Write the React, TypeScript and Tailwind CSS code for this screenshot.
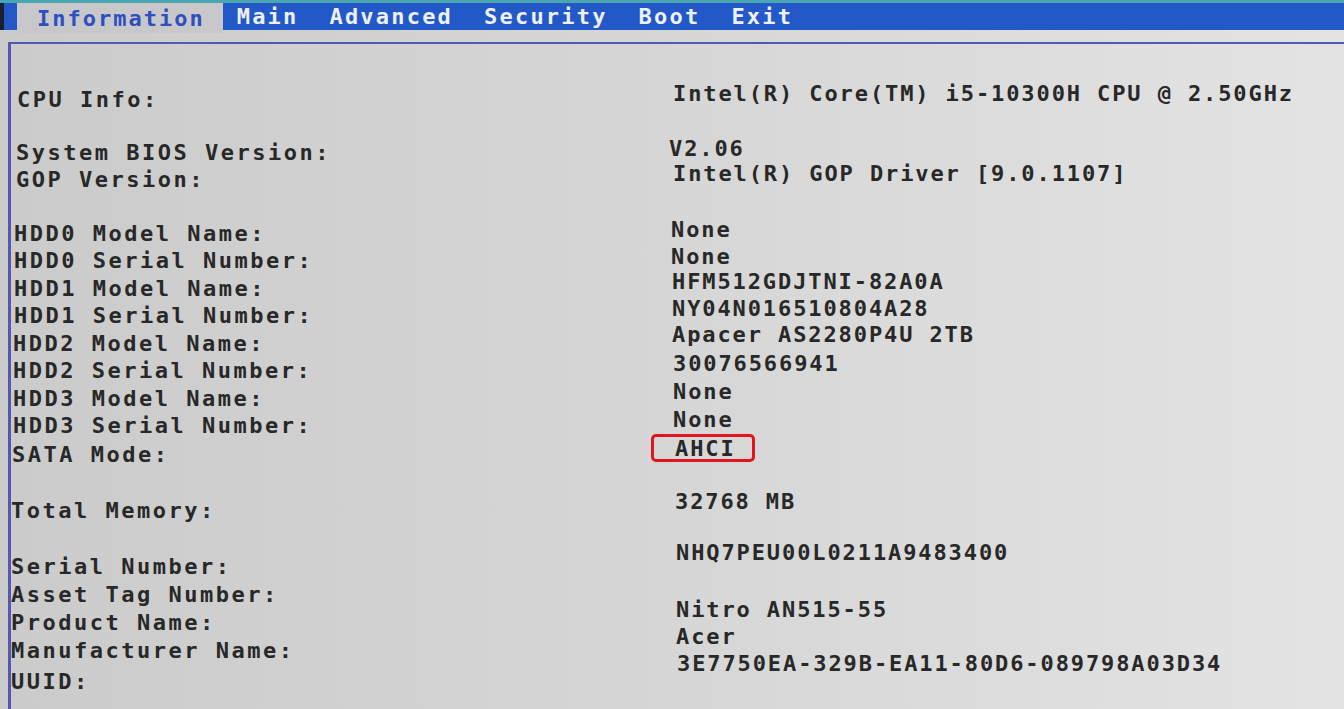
import React from "react";

type Row = { text: string; cls: string; box?: boolean };

const labels: Row[] = [
  { text: "CPU Info:", cls: "h-[27px] leading-[27px] mt-[42px] pl-[6px]" },
  { text: "System BIOS Version:", cls: "h-[27px] leading-[27px] mt-[26px] pl-[5px]" },
  { text: "GOP Version:", cls: "h-[27px] leading-[27px] mt-0 pl-[5px]" },
  { text: "HDD0 Model Name:", cls: "h-[27px] leading-[27px] mt-[27px] pl-[3px]" },
  { text: "HDD0 Serial Number:", cls: "h-[27px] leading-[27px] mt-0 pl-[3px]" },
  { text: "HDD1 Model Name:", cls: "h-[27px] leading-[27px] mt-[1px] pl-[3px]" },
  { text: "HDD1 Serial Number:", cls: "h-[27px] leading-[27px] mt-0 pl-[3px]" },
  { text: "HDD2 Model Name:", cls: "h-[27px] leading-[27px] mt-[1px] pl-[2px]" },
  { text: "HDD2 Serial Number:", cls: "h-[27px] leading-[27px] mt-0 pl-[2px]" },
  { text: "HDD3 Model Name:", cls: "h-[27px] leading-[27px] mt-[1px] pl-[2px]" },
  { text: "HDD3 Serial Number:", cls: "h-[27px] leading-[27px] mt-0 pl-[2px]" },
  { text: "SATA Mode:", cls: "h-[27px] leading-[27px] mt-[2px] pl-[1px]" },
  { text: "Total Memory:", cls: "h-[27px] leading-[27px] mt-[29px] pl-0" },
  { text: "Serial Number:", cls: "h-[27px] leading-[27px] mt-[29px] pl-0" },
  { text: "Asset Tag Number:", cls: "h-[27px] leading-[27px] mt-[1px] pl-0" },
  { text: "Product Name:", cls: "h-[27px] leading-[27px] mt-[1px] pl-0" },
  { text: "Manufacturer Name:", cls: "h-[27px] leading-[27px] mt-[1px] pl-0" },
  { text: "UUID:", cls: "h-[27px] leading-[27px] mt-[4px] pl-0" },
];

const values: Row[] = [
  { text: "Intel(R) Core(TM) i5-10300H CPU @ 2.50GHz", cls: "h-[27px] leading-[27px] mt-[36px] pl-[4px]" },
  { text: "V2.06", cls: "h-[27px] leading-[27px] mt-[28px] pl-0" },
  { text: "Intel(R) GOP Driver [9.0.1107]", cls: "h-[27px] leading-[27px] -mt-[2px] pl-[4px]" },
  { text: "None", cls: "h-[27px] leading-[27px] mt-[29px] pl-[2px]" },
  { text: "None", cls: "h-[27px] leading-[27px] mt-0 pl-[2px]" },
  { text: "HFM512GDJTNI-82A0A", cls: "h-[27px] leading-[27px] -mt-[2px] pl-[3px]" },
  { text: "NY04N016510804A28", cls: "h-[27px] leading-[27px] mt-0 pl-[3px]" },
  { text: "Apacer AS2280P4U 2TB", cls: "h-[27px] leading-[27px] -mt-[1px] pl-[3px]" },
  { text: "30076566941", cls: "h-[27px] leading-[27px] mt-[2px] pl-[4px]" },
  { text: "None", cls: "h-[27px] leading-[27px] mt-[1px] pl-[4px]" },
  { text: "None", cls: "h-[27px] leading-[27px] mt-[1px] pl-[4px]" },
  { text: "AHCI", cls: "mt-[1px]", box: true },
  { text: "32768 MB", cls: "h-[27px] leading-[27px] mt-[26px] pl-[6px]" },
  { text: "NHQ7PEU00L0211A9483400", cls: "h-[27px] leading-[27px] mt-[24px] pl-[7px]" },
  { text: "Nitro AN515-55", cls: "h-[27px] leading-[27px] mt-[30px] pl-[7px]" },
  { text: "Acer", cls: "h-[27px] leading-[27px] mt-0 pl-[7px]" },
  { text: "3E7750EA-329B-EA11-80D6-089798A03D34", cls: "h-[27px] leading-[27px] mt-0 pl-[8px]" },
];

const fontCls =
  "[font-family:'DejaVu_Sans_Mono','Liberation_Mono',monospace] text-[22px] font-bold";

export default function App() {
  return (
    <div
      className={`w-[1344px] h-[709px] overflow-hidden flex flex-col bg-gradient-to-r from-[#cbcbcb] via-[#d6d6d6] to-[#e3e3e3] text-[#282828] ${fontCls}`}
    >
      <div className="h-[3px] shrink-0 bg-[#4aa7b2]" />
      <div className="h-[27px] shrink-0 flex bg-[#2358c8] text-[#eef0f8]">
        <div className="w-[4px] bg-[#1a2030]" />
        <div className="w-[13px]" />
        <div className="h-[30px] flex items-center bg-[#c8c8ca] text-[#2e4fc0] pl-[20px] pr-[18px] tracking-[2px]">
          Information
        </div>
        <div className="flex items-center gap-[31px] pl-[14px] tracking-[2.2px]">
          <span>Main</span>
          <span>Advanced</span>
          <span>Security</span>
          <span>Boot</span>
          <span>Exit</span>
        </div>
      </div>
      <div className="flex-1 flex ml-[8px] mt-[12px] border-l-[3px] border-t-[2px] border-[#5458b0]">
        <div className="w-[658px] shrink-0 flex flex-col tracking-[2.5px]">
          {labels.map((r, i) => (
            <div key={i} className={`whitespace-pre ${r.cls}`}>
              {r.text}
            </div>
          ))}
        </div>
        <div className="flex flex-col tracking-[1.9px]">
          {values.map((r, i) =>
            r.box ? (
              <div key={i} className={`h-[28px] flex ${r.cls}`}>
                <div className="-ml-[18px] h-[28px] flex items-center pl-[21px] pr-[16px] border-[3px] border-[#e3141b] rounded-[5px]">
                  AHCI
                </div>
              </div>
            ) : (
              <div key={i} className={`whitespace-pre ${r.cls}`}>
                {r.text}
              </div>
            )
          )}
        </div>
      </div>
    </div>
  );
}
